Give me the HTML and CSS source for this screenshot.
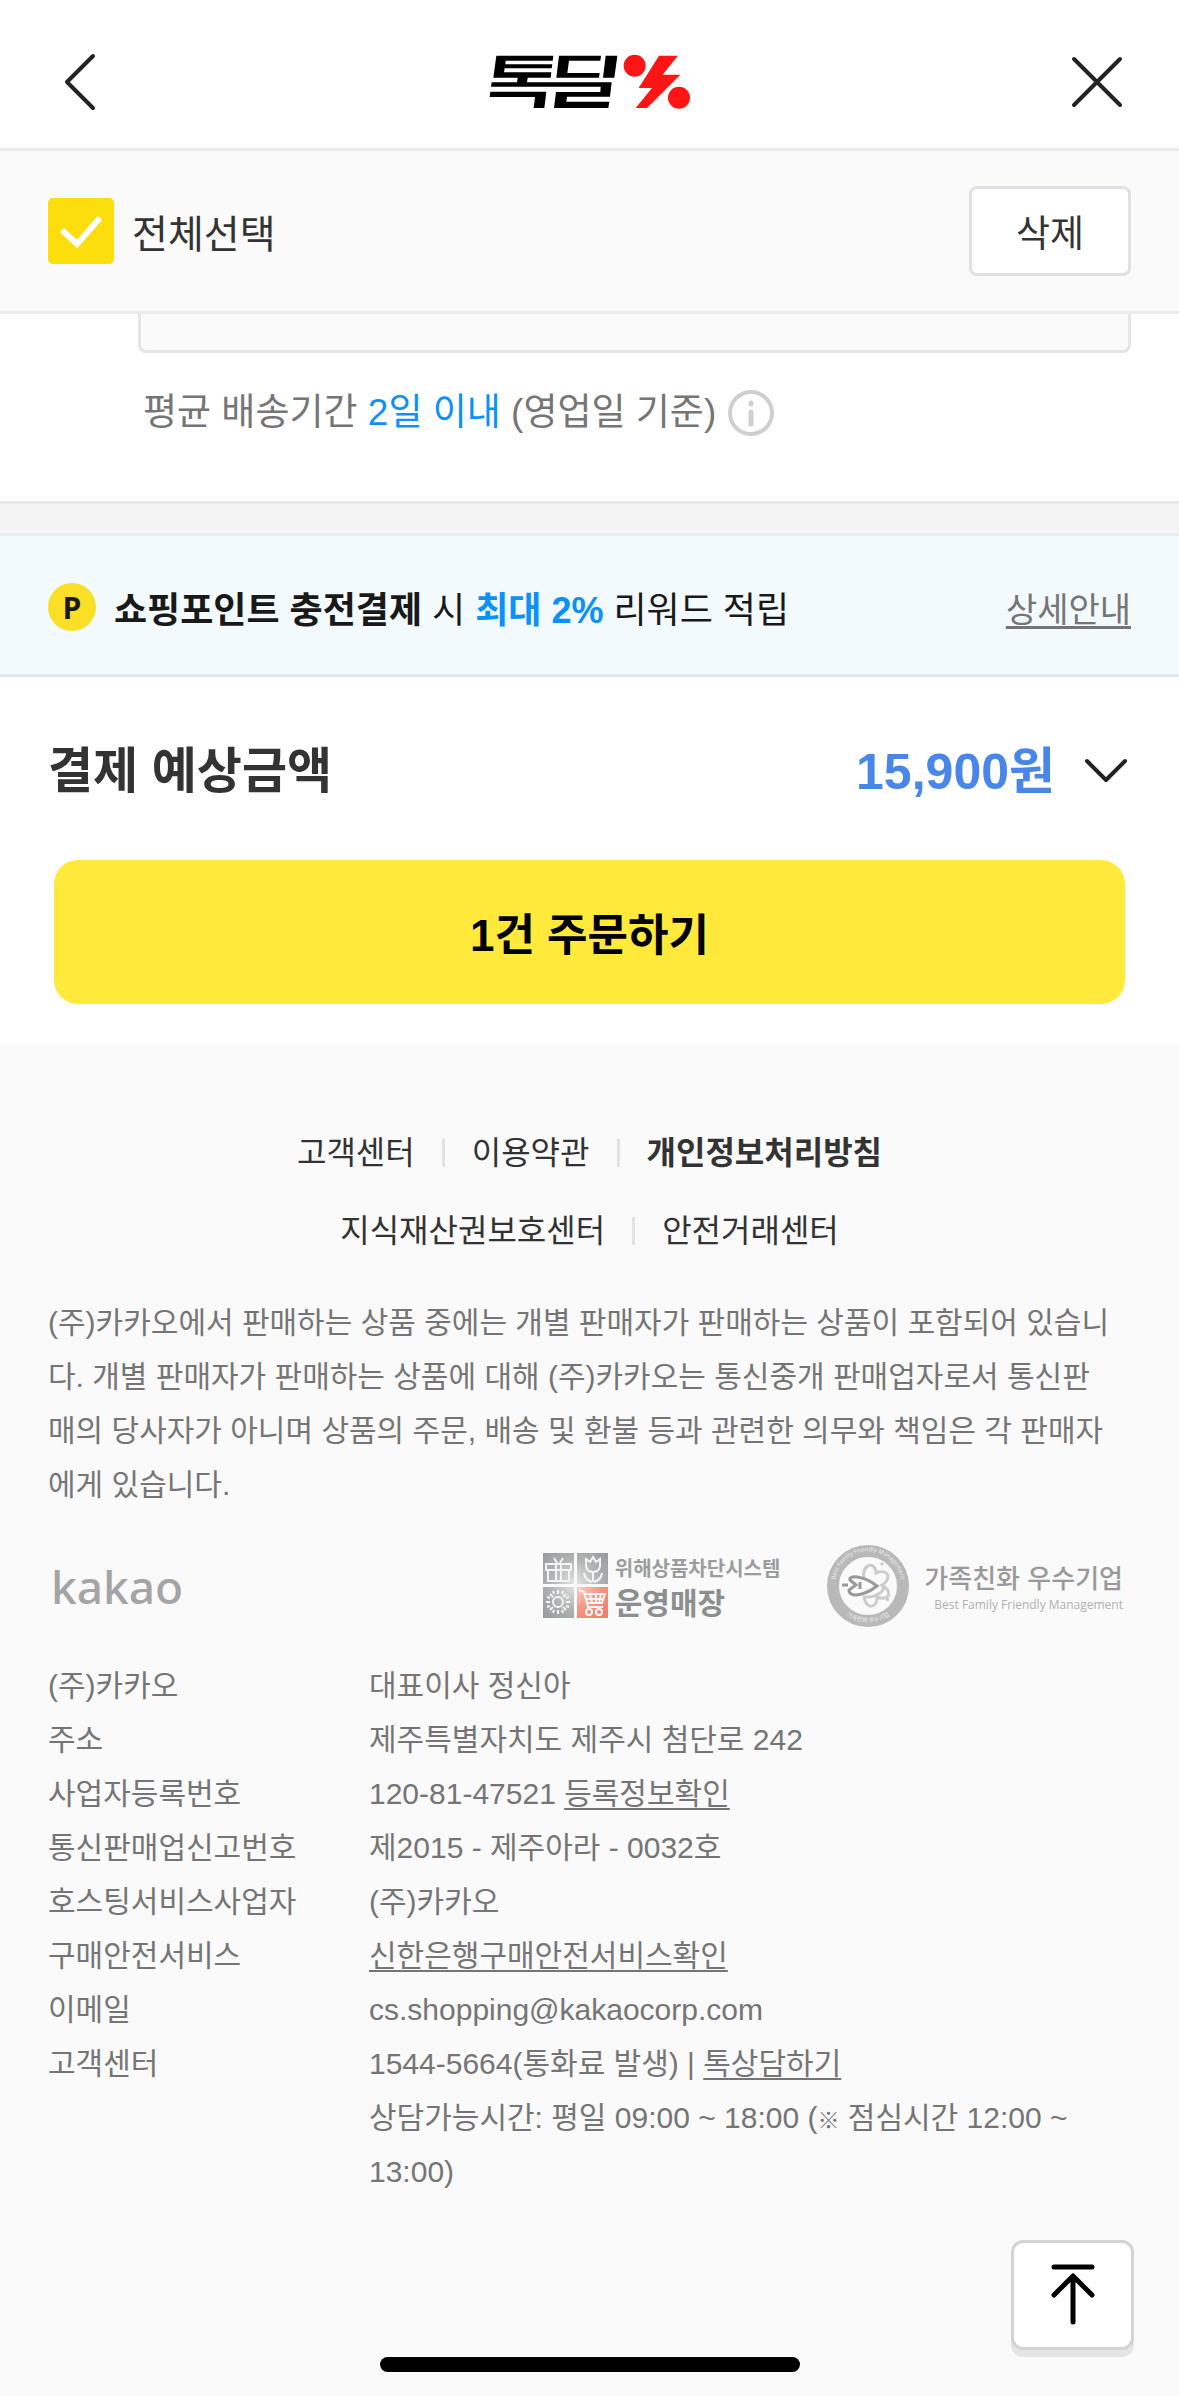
FILE: index.html
```html
<!DOCTYPE html>
<html lang="ko">
<head>
<meta charset="utf-8">
<meta name="viewport" content="width=device-width, initial-scale=1">
<title>톡딜 장바구니</title>
<link rel="stylesheet" href="styles.css">
</head>
<body>
<header class="topbar">
  <button class="icon-btn back" type="button" aria-label="뒤로">
    <svg width="36" height="60" viewBox="0 0 36 60"><path class="stroke" d="M31 4 5 30l26 26"/></svg>
  </button>
  <svg class="deal-logo" role="img" aria-label="톡딜" width="202" height="56" viewBox="56 45 606 168">
    <path d="M78 50H249L247 65H106L105 76H246L244 88H103L101 100H243L241 116H172L170 130H424L419 173H290L288 188H417L414 207H251L257 159H390L391 143H62L64 130H140L142 116H69Z"/>
    <path d="M60 158H228L222 207H190L194 174H58Z"/>
    <path d="M266 50H392L390 65H296L291 102H388L386 116H258ZM406 50H441L432 116H398Z"/>
    <g class="spark"><circle cx="493" cy="80" r="33"/><circle cx="626" cy="176" r="33"/><path d="M566 50H623L577 107H630L530 207H496L545 147H505Z"/></g>
  </svg>
  <button class="icon-btn" type="button" aria-label="닫기">
    <svg width="52" height="52" viewBox="0 0 52 52"><path class="stroke" d="M3 3l46 46M49 3 3 49"/></svg>
  </button>
</header>

<section class="selectbar">
  <label class="select-all"><input class="check" type="checkbox" checked>전체선택</label>
  <button class="delete" type="button">삭제</button>
</section>

<main>
  <section class="delivery">
    <div class="option-box"></div>
    <div class="eta"><p>평균 배송기간 <span class="blue">2일 이내</span> (영업일 기준)</p>
      <button type="button" aria-label="배송기간 안내">
        <svg class="info" width="46" height="46" viewBox="0 0 46 46"><circle cx="23" cy="23" r="21"/><path d="M23 22v12M23 13v1"/></svg>
      </button>
    </div>
  </section>

  <section class="reward">
    <span class="point">P</span>
    <p class="reward-text"><strong>쇼핑포인트 충전결제</strong> 시 <strong class="blue">최대 2%</strong> 리워드 적립</p>
    <a class="detail" href="#reward">상세안내</a>
  </section>

  <section class="payment">
    <div class="total">
      <h2 class="total-label">결제 예상금액</h2>
      <button class="amount" type="button">15,900원
        <svg class="chevron" width="42" height="26" viewBox="0 0 42 26"><path class="stroke" d="M2 3l19 19L40 3"/></svg>
      </button>
    </div>
    <button class="order" type="button">1건 주문하기</button>
  </section>
</main>

<footer class="footer">
  <nav class="links">
    <div class="link-row"><a href="#help">고객센터</a><a href="#terms">이용약관</a><a class="strong" href="#privacy">개인정보처리방침</a></div>
    <div class="link-row"><a href="#ip">지식재산권보호센터</a><a href="#safe">안전거래센터</a></div>
  </nav>
  <p class="notice">(주)카카오에서 판매하는 상품 중에는 개별 판매자가 판매하는 상품이 포함되어 있습니다. 개별 판매자가 판매하는 상품에 대해 (주)카카오는 통신중개 판매업자로서 통신판매의 당사자가 아니며 상품의 주문, 배송 및 환불 등과 관련한 의무와 책임은 각 판매자에게 있습니다.</p>

  <div class="marks">
    <span class="kakao">kakao</span>
    <div class="mark">
      <svg width="66" height="66" viewBox="0 0 66 66">
        <defs>
          <radialGradient id="gray" gradientUnits="userSpaceOnUse" cx="32" cy="31" r="42"><stop offset="0" stop-color="#e3e7e6"/><stop offset=".6" stop-color="#aeb4b3"/><stop offset="1" stop-color="#999f9e"/></radialGradient>
          <radialGradient id="red" gradientUnits="userSpaceOnUse" cx="32" cy="31" r="42"><stop offset="0" stop-color="#fbd9d2"/><stop offset=".6" stop-color="#f59684"/><stop offset="1" stop-color="#f0806d"/></radialGradient>
        </defs>
        <path fill="url(#gray)" d="M0 0h31v31H0zM34 0h31v31H34zM0 34h31v31H0z"/>
        <path fill="url(#red)" d="M34 34h31v31H34z"/>
        <g class="tile">
          <path d="M3 11h25v6H3zM5 17h21v11H5zM13 11v17M18 11v17M14 10l-3-5M17 10l3-5"/>
          <path d="M43 6l4 3 3-5 3 5 4-3v7q-1 6-7 6t-7-6zM50 19v10M49 29q-7-2-8-9M51 29q7-2 8-9"/>
          <circle cx="15" cy="49" r="5"/>
          <path d="M15 37v4M15 57v4M3 49h4M23 49h4M7 41l3 3M20 54l3 3M23 41l-3 3M10 54l-3 3M10 38l1 3M20 38l-1 3M10 60l1-3M20 60l-1-3M4 44l3 1M26 44l-3 1M4 54l3-1M26 54l-3-1"/>
          <path d="M36 37l5 2 4 15h15M41 41h21l-3 9H44M47 41l2 9M53 41v9M58 41l-2 9M43 46h17"/>
          <circle cx="46" cy="59" r="3"/><circle cx="56" cy="59" r="3"/>
        </g>
      </svg>
      <div class="mark-text"><span class="safe-top">위해상품차단시스템</span><span class="safe-bottom">운영매장</span></div>
    </div>
    <div class="mark">
      <svg class="seal" width="84" height="84" viewBox="0 0 84 84">
        <defs><path id="arc-top" d="M12 54A33 33 0 1 1 72 54"/><path id="arc-bottom" d="M8 56A37 37 0 0 0 76 56"/></defs>
        <circle class="ring" cx="42" cy="42" r="35"/>
        <text><textPath href="#arc-top" startOffset="50%">Best Family Friendly Management</textPath></text>
        <text class="seal-ko"><textPath href="#arc-bottom" startOffset="50%">가족친화 우수기업</textPath></text>
        <path class="petal" d="M38 35c-3-16 12-18 12-6 13-5 16 6 6 12 11 6 8 17-5 12 0 13-12 12-13-1M38 53c12 1 24-7 18-12M55 21l2-2M60 55l3 1"/>
        <path class="petal dark" d="M51 42C37 31 22 31 24 36l6 5-7 5c0 8 15 6 28-4zM16 41h6M34 38v7"/>
      </svg>
      <div class="mark-text family"><span class="family-top">가족친화 우수기업</span><span class="family-bottom">Best Family Friendly Management</span></div>
    </div>
  </div>

  <dl class="company">
    <dt>(주)카카오</dt><dd>대표이사 정신아</dd>
    <dt>주소</dt><dd>제주특별자치도 제주시 첨단로 242</dd>
    <dt>사업자등록번호</dt><dd>120-81-47521 <a href="#biz">등록정보확인</a></dd>
    <dt>통신판매업신고번호</dt><dd>제2015 - 제주아라 - 0032호</dd>
    <dt>호스팅서비스사업자</dt><dd>(주)카카오</dd>
    <dt>구매안전서비스</dt><dd><a href="#escrow">신한은행구매안전서비스확인</a></dd>
    <dt>이메일</dt><dd>cs.shopping@kakaocorp.com</dd>
    <dt>고객센터</dt><dd>1544-5664(통화료 발생) | <a href="#talk">톡상담하기</a><br>상담가능시간: 평일 09:00 ~ 18:00 (<span class="ref-mark">※</span> 점심시간 12:00 ~ 13:00)</dd>
  </dl>
</footer>

<button class="to-top" type="button" aria-label="맨 위로">
  <svg width="44" height="62" viewBox="0 0 44 62"><path d="M3 3h38M22 58V12M3 31l19-19 19 19"/></svg>
</button>
<div class="home-bar"></div>
</body>
</html>
```
FILE: styles.css
```css
* { box-sizing: border-box; }
body {
  margin: 0;
  background: #fafafa;
  color: #333;
  font-family: "Liberation Sans", "Noto Sans CJK KR", sans-serif;
  font-size: 30px;
}
p, h2, dl, dd { margin: 0; }
a { color: inherit; text-decoration: none; }
button { margin: 0; padding: 0; border: 0; background: none; color: inherit; font: inherit; }
svg { display: block; }
.stroke { fill: none; stroke: #222; stroke-width: 4; stroke-linecap: round; stroke-linejoin: round; }
.blue { color: #0b91f8; }

.topbar {
  display: flex; align-items: center; justify-content: space-between;
  height: 151px; padding: 16px 56px 0 62px;
  background: #fff; border-bottom: 3px solid #ebebeb;
}
.icon-btn { display: flex; width: 52px; }
.back { width: 46px; }
.spark { fill: #ff1515; }

.selectbar {
  display: flex; align-items: center; justify-content: space-between;
  height: 163px; padding: 0 48px; border-bottom: 3px solid #ebebeb;
}
.select-all { display: flex; align-items: center; gap: 18px; font-size: 39px; }
.check {
  appearance: none; width: 66px; height: 66px; margin: 0; border-radius: 5px;
  background: #fbde0b url("data:image/svg+xml,%3Csvg xmlns='http://www.w3.org/2000/svg' viewBox='0 0 66 66'%3E%3Cpath d='M14 32l15 14 23-26' fill='none' stroke='white' stroke-width='6'/%3E%3C/svg%3E");
}
.delete {
  width: 162px; height: 90px; border: 3px solid #e1e1e5; border-radius: 8px;
  background: #fff; font-size: 37px;
}

.delivery { height: 190px; padding: 0 48px 0 138px; background: #fff; border-bottom: 3px solid #e8e8e8; }
.option-box { height: 39px; border: 3px solid #e5e5e5; border-top: 0; border-radius: 0 0 8px 8px; background: #fafafa; }
.eta { display: flex; align-items: center; gap: 12px; padding: 36px 5px 0; color: #757575; font-size: 37px; line-height: 48px; white-space: nowrap; }
.info { fill: none; stroke: #cfcfcf; stroke-width: 4; stroke-linecap: round; }
.info path { stroke-width: 5; }

.reward {
  display: flex; align-items: center; gap: 18px;
  margin-top: 29px; height: 144px; padding: 4px 48px 0;
  border-top: 3px solid #ebebeb; border-bottom: 3px solid #dbe9fb;
  background: #f2fafe; color: #191919;
  box-shadow: 0 -29px #f4f4f4;
}
.point {
  display: grid; place-items: center; width: 48px; height: 48px; border-radius: 50%;
  background: #fadf27; font: 700 30px "Open Sans", sans-serif;
}
.reward-text { flex: 1; font-size: 36px; white-space: nowrap; }
.detail { color: #757575; font-size: 34px; text-decoration: underline; text-underline-offset: 4px; }

.payment { padding: 0 48px 40px; background: #fff; }
.total { display: flex; align-items: center; justify-content: space-between; height: 183px; padding-bottom: 4px; }
.total-label { font-size: 49px; }
.amount { display: flex; align-items: center; gap: 30px; padding-right: 4px; color: #4986ea; font-size: 50px; font-weight: 700; }
.chevron { margin-top: 8px; }
.order { display: block; width: calc(100% - 12px); height: 144px; margin: 0 6px; border-radius: 24px; background: #ffea3c; color: #000; font-size: 44px; font-weight: 700; }

.footer { padding: 70px 48px 150px; color: #757575; line-height: 54px; }
.links { color: #333; font-size: 32px; line-height: 78px; }
.link-row { display: flex; justify-content: center; }
.link-row a { display: flex; align-items: center; }
.link-row a + a::before { content: ""; width: 3px; height: 28px; margin: 0 27px; background: #e2e2e2; }
.strong { font-weight: 700; }
.notice { padding: 26px 18px 0 0; word-break: break-all; }
.marks { display: flex; align-items: center; height: 96px; margin-top: 26px; line-height: 1; }
.kakao { flex: 1; padding-left: 3px; color: #a4a4a4; font: 500 46px "Noto Sans", sans-serif; }
.mark { display: flex; align-items: center; gap: 6px; margin-right: 46px; white-space: nowrap; }
.mark:last-child { margin-right: 8px; gap: 14px; }
.mark-text { display: flex; flex-direction: column; font-family: "Noto Sans CJK KR", sans-serif; font-weight: 700; }
.safe-top { color: #999e9d; font-size: 20px; line-height: 30px; }
.safe-bottom { color: #8a908f; font-size: 30px; line-height: 36px; }
.tile { fill: none; stroke: #f3f5f4; stroke-width: 2; }
.ring { fill: none; stroke: #b9b9b9; stroke-width: 12; }
.seal text { fill: #eee; font: 6px "Open Sans", sans-serif; text-anchor: middle; }
.seal .seal-ko { font-family: "Noto Sans CJK KR", sans-serif; }
.petal { fill: none; stroke: #ccc; stroke-width: 3; }
.petal.dark { stroke: #999; }
.family { align-items: flex-end; }
.family-top { color: #999; font-size: 26px; font-weight: 500; line-height: 38px; }
.family-bottom { color: #b0b0b0; font: 12px/18px "Open Sans", sans-serif; }
.company { display: grid; grid-template-columns: 321px 1fr; margin-top: 25px; }
.company a { text-decoration: underline; text-underline-offset: 4px; text-decoration-thickness: 2px; }
.ref-mark { font-size: 22px; line-height: 1; }

.to-top {
  position: fixed; right: 45px; bottom: 46px;
  display: grid; place-items: center; width: 123px; height: 110px;
  border: 3px solid #d4d4d4; border-radius: 12px; background: #fff; box-shadow: 0 7px #e5e5e5;
}
.to-top svg { fill: none; stroke: #000; stroke-width: 5; stroke-linecap: round; stroke-linejoin: round; }
.home-bar { position: fixed; left: 50%; bottom: 24px; width: 420px; height: 15px; margin-left: -210px; border-radius: 8px; background: #000; }
```
